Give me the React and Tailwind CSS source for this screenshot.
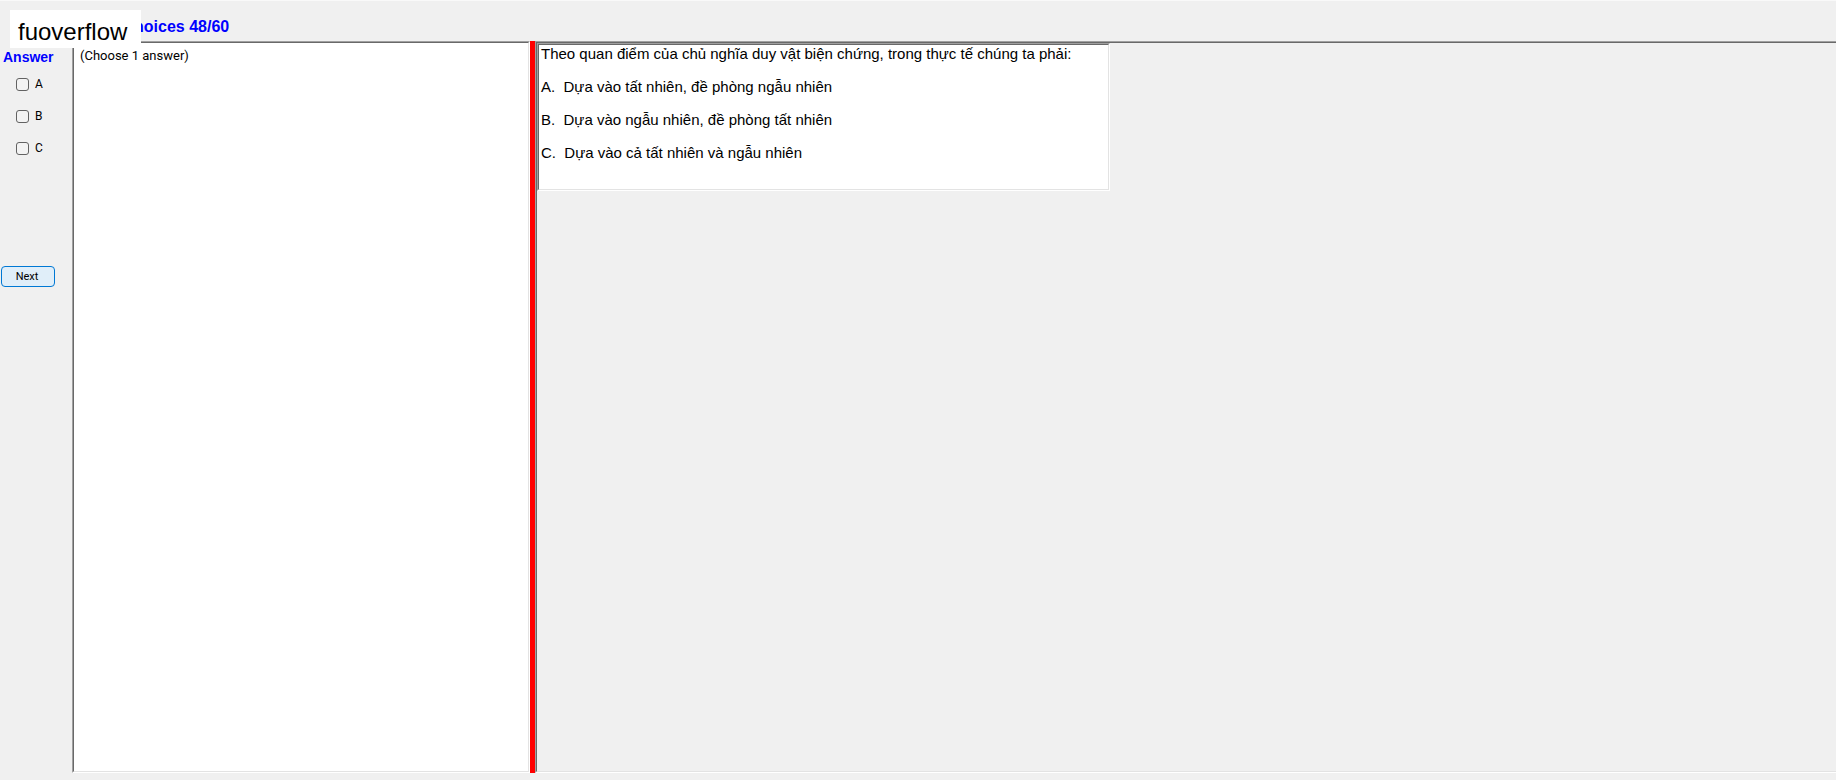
import React, { useState } from 'react';

const OPTIONS = [
    { id: 'A', text: 'Dựa vào tất nhiên, đề phòng ngẫu nhiên' },
    { id: 'B', text: 'Dựa vào ngẫu nhiên, đề phòng tất nhiên' },
    { id: 'C', text: 'Dựa vào cả tất nhiên và ngẫu nhiên' },
];

// Two-tone inset border, like a classic desktop panel
const SunkenPanel = ({ className, innerClassName, children }) => (
    <div className={`flex border border-t-[#a0a0a0] border-l-[#a0a0a0] border-r-white border-b-white ${className}`}>
        <div className={`flex-1 min-w-0 border border-t-[#696969] border-l-[#696969] border-r-[#e3e3e3] border-b-[#e3e3e3] ${innerClassName}`}>
            {children}
        </div>
    </div>
);

const AnswerColumn = ({ checked, onToggle }) => (
    <aside className="w-[72px] shrink-0 font-[Roboto,Arial,sans-serif]">
        <h2 className="pt-2 pl-[3px] text-sm leading-4 font-bold text-[#0000ff] font-['Liberation_Sans',Arial,sans-serif]">Answer</h2>
        <div className="mt-[11px] pl-4 flex flex-col gap-4">
            {OPTIONS.map(({ id }) => (
                <label key={id} className="flex items-center gap-1.5 h-4 text-xs leading-4">
                    <input type="checkbox"
                           checked={checked === id}
                           onChange={() => onToggle(id)}
                           className="appearance-none size-[13px] bg-[#f3f3f3] checked:bg-[#0078d4] border border-[#626262] rounded-[3px]" />
                    {id}
                </label>
            ))}
        </div>
        <button type="button" className="mt-[110px] ml-px w-[54px] h-[21px] pt-px pr-0.5 text-[11px] leading-4 bg-[#e0eef9] border border-[#0078d4] rounded-sm">
            Next
        </button>
    </aside>
);

export default function App() {
    const [checked, setChecked] = useState(null);
    const toggle = (id) => setChecked(checked === id ? null : id);

    return (
        <div className="relative min-h-screen flex flex-col pb-[7px] bg-[#f0f0f0] border-t border-[#f9f9f9] text-black font-['Liberation_Sans',Arial,sans-serif]">
            <header className="h-10 flex items-center pt-3 pl-[134px]">
                <h1 className="text-base leading-5 font-bold text-[#0000ff]">hoices 48/60</h1>
            </header>

            <main className="flex-1 flex">
                <AnswerColumn checked={checked} onToggle={toggle} />

                <SunkenPanel className="w-[458px] shrink-0" innerClassName="bg-white">
                    <p className="pt-[3px] pl-1.5 text-[13px] leading-5 font-[Roboto,Arial,sans-serif]">(Choose 1 answer)</p>
                </SunkenPanel>

                <div className="w-[5px] shrink-0 bg-[#ff0000]" />

                <SunkenPanel className="flex-1 min-w-0 border-r-0" innerClassName="border-r-0">
                    <SunkenPanel className="w-[573px] h-[148px]" innerClassName="bg-white pl-0.5 text-[15px] leading-[17px]">
                        <p>Theo quan điểm của chủ nghĩa duy vật biện chứng, trong thực tế chúng ta phải:</p>
                        {OPTIONS.map(({ id, text }) => (
                            <p key={id} className="mt-4 whitespace-pre">{`${id}.  ${text}`}</p>
                        ))}
                    </SunkenPanel>
                </SunkenPanel>
            </main>

            <div className="absolute top-[9px] left-[10px] w-[131px] h-[38px] pl-2 bg-white text-2xl leading-[44px]">
                fuoverflow
            </div>
        </div>
    );
}
